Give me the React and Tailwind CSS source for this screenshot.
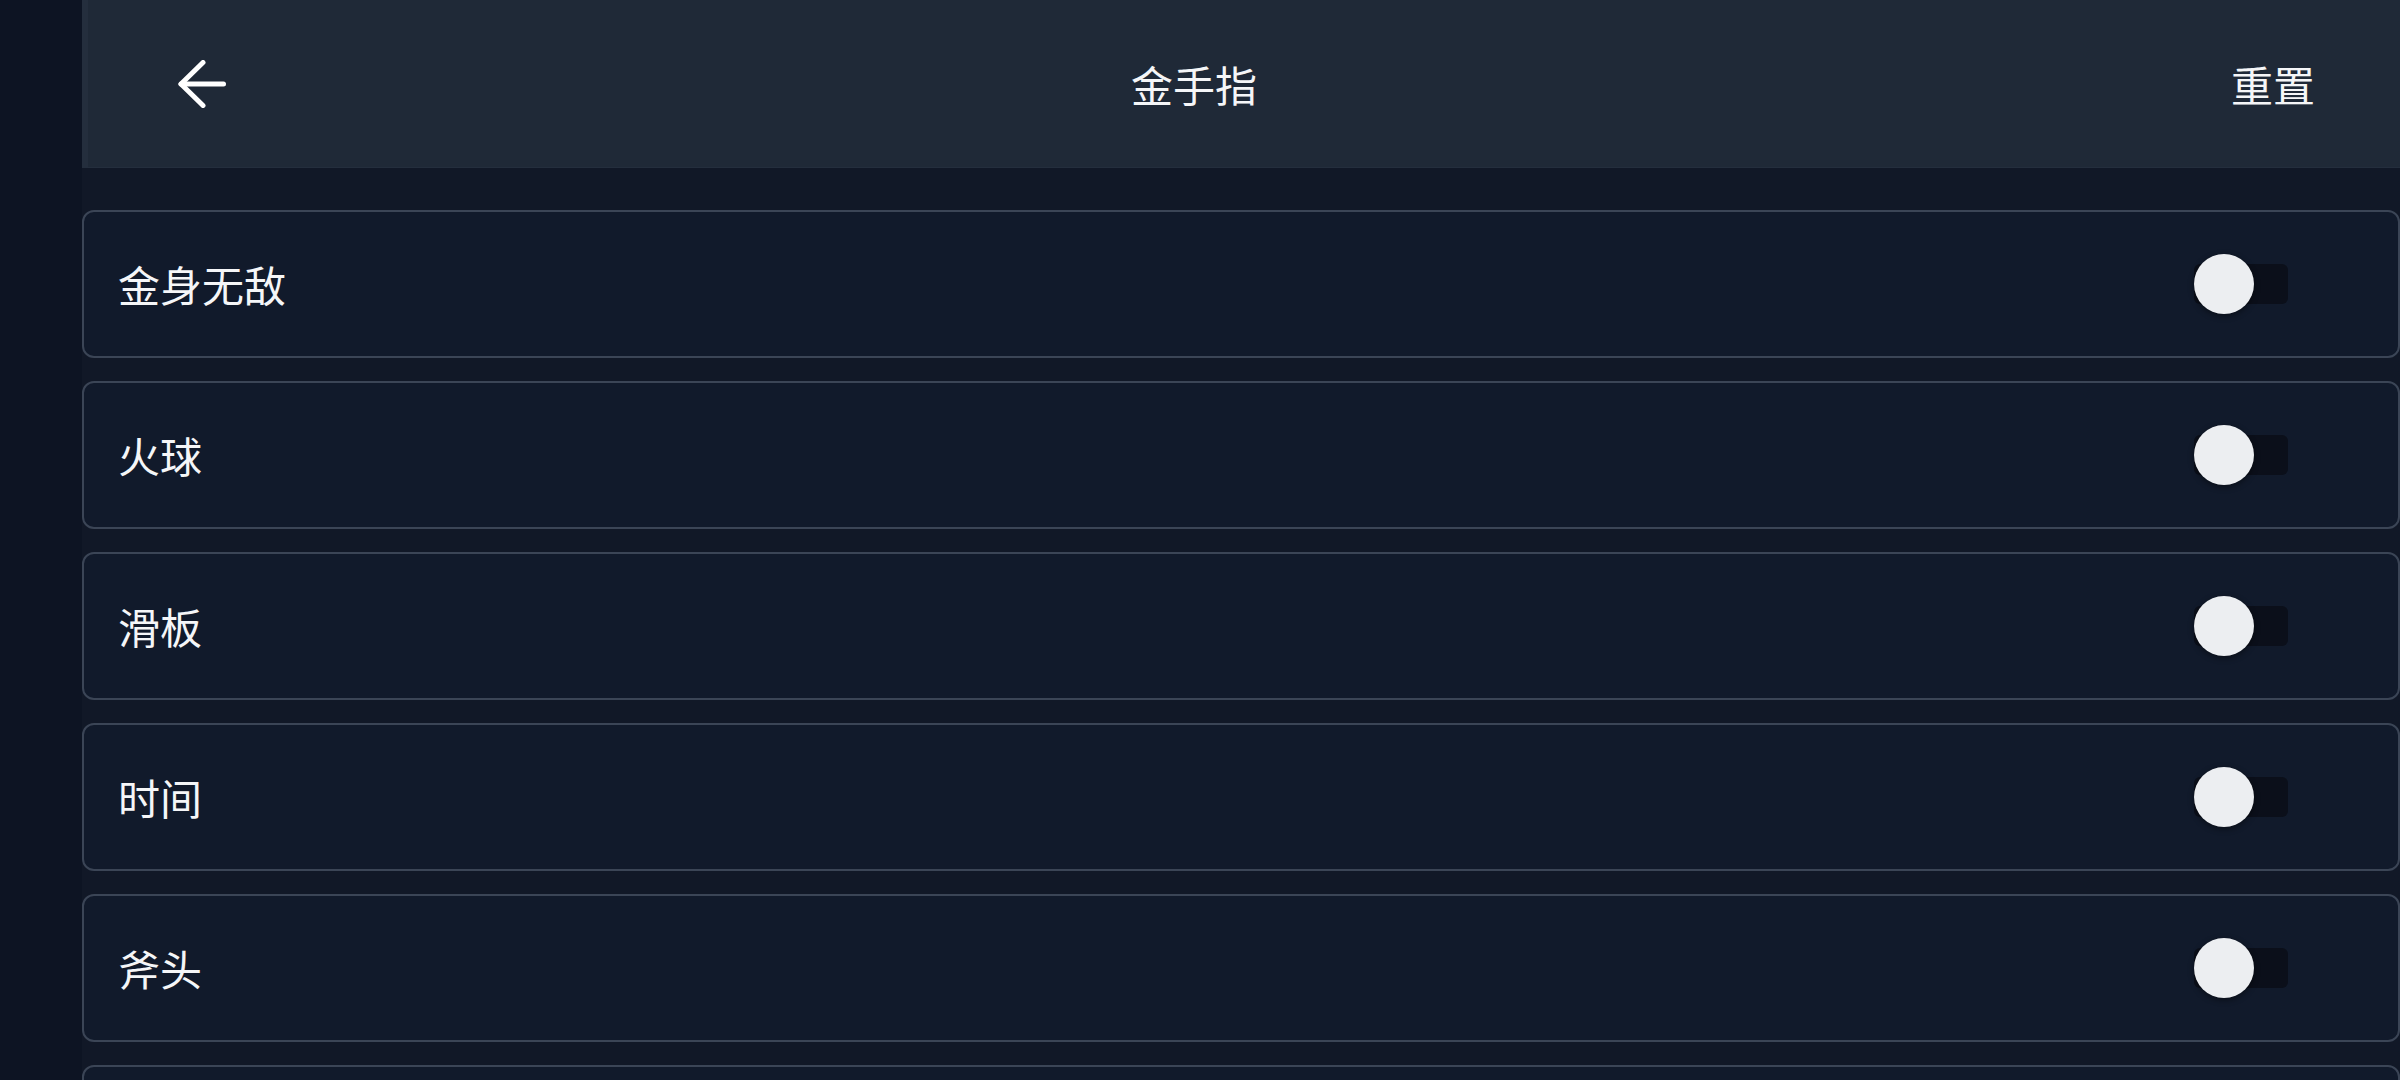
const cheats = ['金身无敌', '火球', '滑板', '时间', '斧头', '']

function Toggle({ on }) {
  return (
    <div className="relative w-[94px] h-[60px] flex items-center">
      <div className="w-[94px] h-[40px] rounded-[6px] bg-[#0b0f1a]" />
      <div
        className={`absolute top-0 ${on ? 'left-[34px]' : 'left-0'} w-[60px] h-[60px] rounded-full bg-[#eceef1] shadow-[0_2px_6px_rgba(0,0,0,0.45)]`}
      />
    </div>
  )
}

export default function App() {
  return (
    <div
      className="flex h-[1080px] overflow-hidden bg-[#111827] text-[#f5f6f8]"
      style={{ fontFamily: '"Noto Sans CJK SC", "Noto Sans", sans-serif' }}
    >
      <div className="w-[82px] shrink-0 bg-[#0d1423]" />
      <div className="flex-1 flex flex-col">
        <div className="h-[168px] shrink-0 flex items-center bg-[#1f2937] border-l-[6px] border-b border-[#242e3d] pl-[90px]">
          <button className="w-[48px] h-[48px] text-white">
            <svg viewBox="0 0 48 48" width="48" height="48" fill="none" stroke="currentColor" strokeWidth="5" strokeLinecap="round" strokeLinejoin="round">
              <path d="M25 2.5 3 24l22 21.5" />
              <path d="M45.5 24H3" />
            </svg>
          </button>
          <div className="flex-1 text-center text-[42px] leading-none">金手指</div>
          <button className="pl-[69px] pr-[85px] text-[42px] leading-none">重置</button>
        </div>
        <div className="flex flex-col gap-[23px] pt-[42px]">
          {cheats.map((name, i) => (
            <div
              key={i}
              className="h-[148px] shrink-0 flex items-center justify-between rounded-[12px] border-2 border-[#3b4556] bg-[#111a2b] pl-[34px] pr-[110px]"
            >
              <span className="text-[42px] leading-none">{name}</span>
              <Toggle on={false} />
            </div>
          ))}
        </div>
      </div>
    </div>
  )
}
